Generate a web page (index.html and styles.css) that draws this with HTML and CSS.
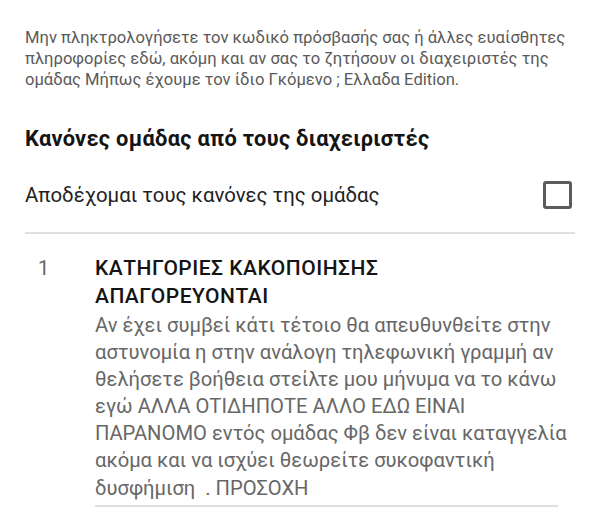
FILE: index.html
```html
<!DOCTYPE html>
<html lang="el">
<head>
<meta charset="utf-8">
<link rel="stylesheet" href="styles.css">
</head>
<body>
<div class="page">
  <p class="desc">Μην πληκτρολογήσετε τον κωδικό πρόσβασής σας ή άλλες ευαίσθητες πληροφορίες εδώ, ακόμη και αν σας το ζητήσουν οι διαχειριστές της ομάδας Μήπως έχουμε τον ίδιο Γκόμενο ; Ελλαδα Edition.</p>
  <h2 class="rules-title">Κανόνες ομάδας από τους διαχειριστές</h2>
  <div class="accept">
    <span class="accept-label">Αποδέχομαι τους κανόνες της ομάδας</span>
    <span class="checkbox"></span>
  </div>
  <div class="divider"></div>
  <div class="rule">
    <div class="rule-num">1</div>
    <div class="rule-body">
      <div class="rule-title">ΚΑΤΗΓΟΡΙΕΣ ΚΑΚΟΠΟΙΗΣΗΣ ΑΠΑΓΟΡΕΥΟΝΤΑΙ</div>
      <div class="rule-text">Αν έχει συμβεί κάτι τέτοιο θα απευθυνθείτε στην<br>αστυνομία η στην ανάλογη τηλεφωνική γραμμή αν<br>θελήσετε βοήθεια στείλτε μου μήνυμα να το κάνω<br>εγώ ΑΛΛΑ ΟΤΙΔΗΠΟΤΕ ΑΛΛΟ ΕΔΩ ΕΙΝΑΙ<br>ΠΑΡΑΝΟΜΟ εντός ομάδας Φβ δεν είναι καταγγελία<br>ακόμα και να ισχύει θεωρείτε συκοφαντική<br>δυσφήμιση &nbsp;. ΠΡΟΣΟΧΗ</div>
      <div class="rule-divider"></div>
    </div>
  </div>
</div>
</body>
</html>
```

FILE: styles.css
```css
html, body {
  margin: 0;
  padding: 0;
  background: #ffffff;
}

body {
  font-family: Roboto, "Noto Sans", "Liberation Sans", sans-serif;
  color: #1c1c1c;
}

.page {
  padding: 0 25px;
}

.desc {
  margin: 27px 0 0;
  font-size: 16.6px;
  line-height: 21px;
  color: #5a5a5a;
}

.rules-title {
  margin: 37px 0 0;
  font-size: 21.8px;
  line-height: 24px;
  letter-spacing: 0.3px;
  font-weight: 700;
  color: #141414;
}

.accept {
  margin-top: 16px;
  height: 56px;
  display: flex;
  align-items: center;
  justify-content: space-between;
}

.accept-label {
  font-size: 20.4px;
  color: #222;
}

.checkbox {
  width: 23px;
  height: 22px;
  border: 3px solid #5c5c5c;
  border-radius: 3px;
  margin-right: 3px;
}

.divider {
  margin-top: 9px;
  height: 2px;
  background: #e0e0e0;
}

.rule {
  display: flex;
  margin-top: 20px;
}

.rule-num {
  flex: 0 0 70px;
  padding-left: 13px;
  box-sizing: border-box;
  font-size: 20px;
  line-height: 28px;
  color: #666;
}

.rule-body {
  flex: 1;
  min-width: 0;
}

.rule-title {
  max-width: 420px;
  font-size: 21px;
  line-height: 28px;
  letter-spacing: 0.5px;
  font-weight: 500;
  color: #141414;
}

.rule-text {
  margin-top: 2px;
  font-size: 20.2px;
  line-height: 27.1px;
  color: #676767;
  white-space: nowrap;
}

.rule-divider {
  margin-top: 3px;
  margin-right: 17px;
  height: 2px;
  background: #dedede;
}
```
